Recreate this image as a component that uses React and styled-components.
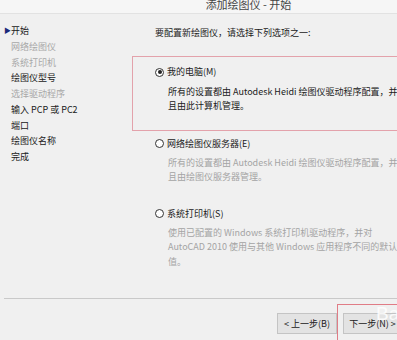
import styled, {createGlobalStyle} from 'styled-components';

const GlobalStyle = createGlobalStyle`
  html, body {
    margin: 0;
    padding: 0;
    background: #f0f0f0;
  }
  body {
    font-family: "Noto Sans CJK SC", "Noto Sans", sans-serif;
    font-size: 9px;
    color: #202020;
  }
`;

const Window = styled.div`
  width: 397px;
  height: 340px;
  overflow: hidden;
  background: #f0f0f0;
  display: flex;
  flex-direction: column;
`;

const TitleBar = styled.div`
  height: 13px;
  flex-shrink: 0;
  background: #f6f6f6;
  border-bottom: 1px solid #e2e2e2;
  display: flex;
  justify-content: center;
  align-items: flex-end;
  padding-left: 100px;
  overflow: hidden;
`;

const TitleText = styled.div`
  font-size: 11px;
  line-height: 11px;
  color: #444;
  margin-bottom: 3px;
  white-space: nowrap;
`;

const Body = styled.div`
  display: flex;
  height: 284px;
  flex-shrink: 0;
`;

const Nav = styled.ul`
  list-style: none;
  margin: 0;
  padding: 9px 0 0 11px;
  width: 121px;
  flex-shrink: 0;
`;

const NavItem = styled.li`
  position: relative;
  height: 15.75px;
  line-height: 15.75px;
  color: ${(p) => (p.$dim ? '#a8a8a8' : '#202020')};
  white-space: nowrap;
`;

const Arrow = styled.span`
  position: absolute;
  left: -7px;
  top: 0;
  font-size: 7px;
  color: #1a2a7a;
`;

const Content = styled.div`
  flex: 1;
  display: flex;
  flex-direction: column;
  padding-top: 12px;
`;

const Prompt = styled.div`
  padding-left: 23px;
  line-height: 14px;
  margin-bottom: 16px;
`;

const Option = styled.div`
  width: 290px;
  flex-shrink: 0;
  padding: ${(p) => p.$pad}px 0 0 22px;
  height: ${(p) => p.$h}px;
  box-sizing: border-box;
  border: 1.5px solid ${(p) => (p.$marked ? '#e3a2ab' : 'transparent')};
`;

const RadioRow = styled.label`
  display: flex;
  align-items: center;
  gap: 3px;
  height: 16px;
  line-height: 16px;
  color: #202020;
`;

const Radio = styled.span`
  width: 7px;
  height: 7px;
  border-radius: 50%;
  border: 1px solid #333;
  background: #fff;
  display: flex;
  align-items: center;
  justify-content: center;

  &::after {
    content: '';
    width: 4px;
    height: 4px;
    border-radius: 50%;
    background: ${(p) => (p.$checked ? '#222' : 'transparent')};
  }
`;

const Desc = styled.p`
  margin: 4.5px 0 0 13px;
  line-height: 14.3px;
  white-space: pre;
  color: ${(p) => (p.$dim ? '#a4a4a4' : '#202020')};
`;

const Footer = styled.div`
  flex: 1;
  margin-left: 4px;
  border-top: 1px solid #c9c9c9;
  display: flex;
  align-items: flex-start;
  padding: 5px 0 0 273px;
`;

const Button = styled.button`
  font-family: inherit;
  font-size: 9px;
  height: 21px;
  padding: 0;
  flex-shrink: 0;
  background: #e3e3e3;
  border: 1px solid #c4c4c4;
  color: #202020;
  white-space: nowrap;
  width: 60px;
  margin-top: ${(p) => p.$top || 0}px;
`;

const NextWrap = styled.div`
  position: relative;
  flex-shrink: 0;
  padding: 8px 0 0 4.5px;
  border: 1.5px solid #e07c86;
  border-right: none;
  height: 40px;
  width: 80px;
`;

const Watermark = styled.span`
  position: absolute;
  left: 38px;
  top: -2px;
  font-family: "Liberation Sans", sans-serif;
  font-size: 19px;
  color: rgba(255, 255, 255, 0.85);
  pointer-events: none;
`;

export default function App() {
    return (
        <Window>
            <GlobalStyle />
            <TitleBar>
                <TitleText>添加绘图仪 - 开始</TitleText>
            </TitleBar>
            <Body>
                <Nav>
                    <NavItem><Arrow>▶</Arrow>开始</NavItem>
                    <NavItem $dim>网络绘图仪</NavItem>
                    <NavItem $dim>系统打印机</NavItem>
                    <NavItem>绘图仪型号</NavItem>
                    <NavItem $dim>选择驱动程序</NavItem>
                    <NavItem>输入 PCP 或 PC2</NavItem>
                    <NavItem>端口</NavItem>
                    <NavItem>绘图仪名称</NavItem>
                    <NavItem>完成</NavItem>
                </Nav>
                <Content>
                    <Prompt>要配置新绘图仪，请选择下列选项之一:</Prompt>
                    <Option $marked $pad={7} $h={75}>
                        <RadioRow><Radio $checked />我的电脑(M)</RadioRow>
                        <Desc>{'所有的设置都由 Autodesk Heidi 绘图仪驱动程序配置，并\n且由此计算机管理。'}</Desc>
                    </Option>
                    <Option $pad={3.5} $h={70}>
                        <RadioRow><Radio />网络绘图仪服务器(E)</RadioRow>
                        <Desc $dim>{'所有的设置都由 Autodesk Heidi 绘图仪驱动程序配置，并\n且由绘图仪服务器管理。'}</Desc>
                    </Option>
                    <Option $pad={3.5} $h={80}>
                        <RadioRow><Radio />系统打印机(S)</RadioRow>
                        <Desc $dim>{'使用已配置的 Windows 系统打印机驱动程序，并对\nAutoCAD 2010 使用与其他 Windows 应用程序不同的默认\n值。'}</Desc>
                    </Option>
                </Content>
            </Body>
            <Footer>
                <Button $top={9}>&lt; 上一步(B)</Button>
                <NextWrap>
                    <Button>下一步(N) &gt;</Button>
                    <Watermark>Ba</Watermark>
                </NextWrap>
            </Footer>
        </Window>
    );
}
